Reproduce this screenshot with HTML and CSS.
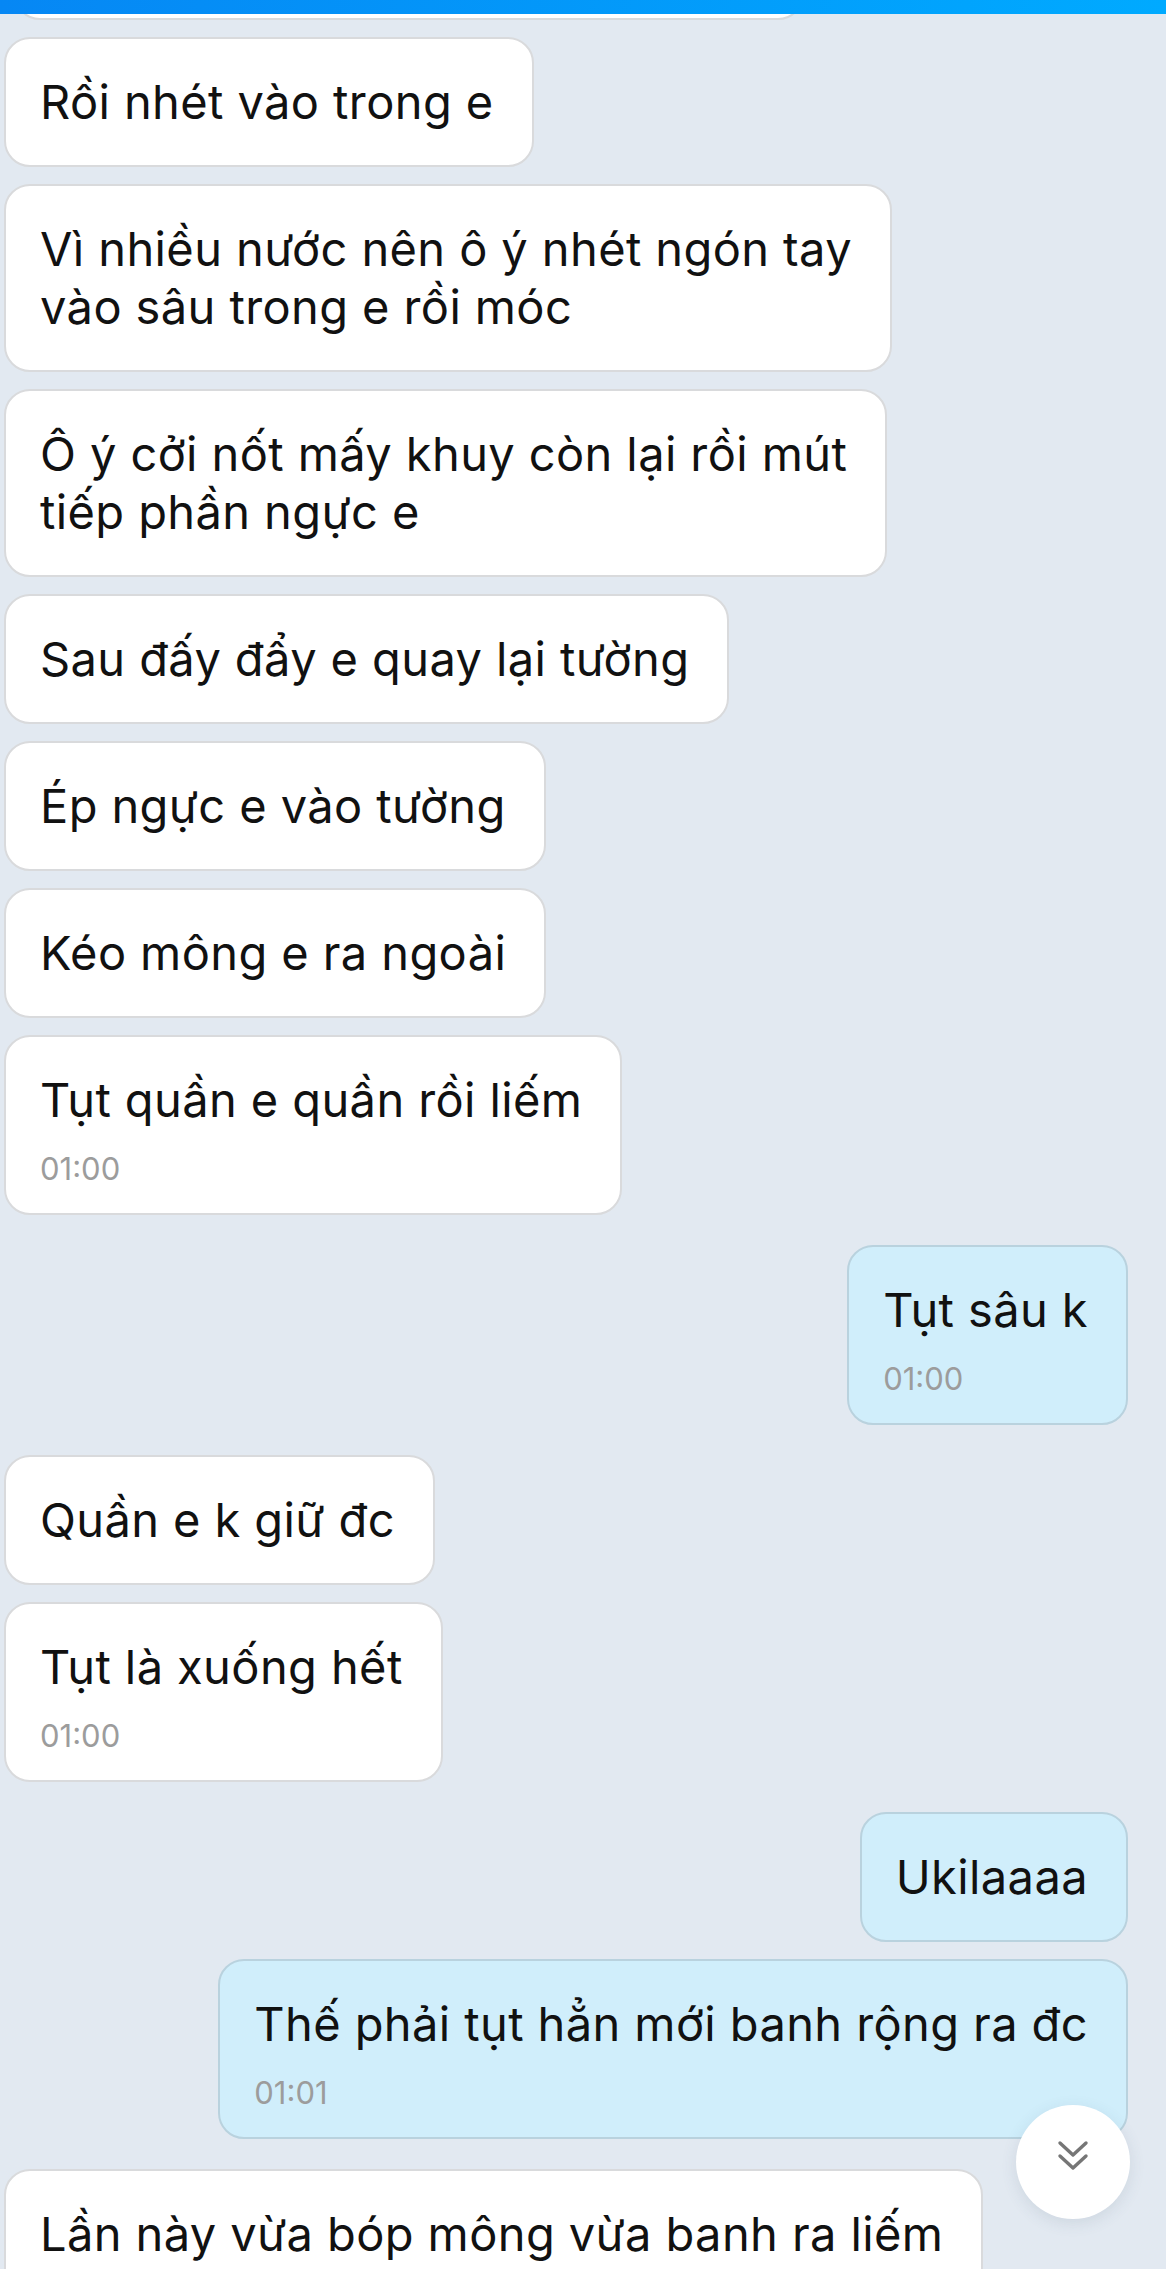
FILE: index.html
```html
<!DOCTYPE html>
<html>
<head>
	<meta charset="utf-8">
	<title>Chat</title>
	<link rel="stylesheet" href="styles.css">
</head>
<body>
	<div class="topbar"></div>

	<main class="chat">
		<div class="group in">
			<div class="bubble peek"></div>
			<div class="bubble">Rồi nhét vào trong e</div>
			<div class="bubble">Vì nhiều nước nên ô ý nhét ngón tay<br>vào sâu trong e rồi móc</div>
			<div class="bubble">Ô ý cởi nốt mấy khuy còn lại rồi mút<br>tiếp phần ngực e</div>
			<div class="bubble">Sau đấy đẩy e quay lại tường</div>
			<div class="bubble">Ép ngực e vào tường</div>
			<div class="bubble">Kéo mông e ra ngoài</div>
			<div class="bubble has-time">Tụt quần e quần rồi liếm<span class="time">01:00</span></div>
		</div>

		<div class="group out">
			<div class="bubble has-time">Tụt sâu k<span class="time">01:00</span></div>
		</div>

		<div class="group in">
			<div class="bubble">Quần e k giữ đc</div>
			<div class="bubble has-time">Tụt là xuống hết<span class="time">01:00</span></div>
		</div>

		<div class="group out">
			<div class="bubble">Ukilaaaa</div>
			<div class="bubble has-time">Thế phải tụt hẳn mới banh rộng ra đc<span class="time">01:01</span></div>
		</div>

		<div class="group in">
			<div class="bubble">Lần này vừa bóp mông vừa banh ra liếm</div>
		</div>
	</main>

	<button type="button" class="scroll-down">
		<svg width="34" height="34" viewBox="0 0 34 34">
			<polyline points="4,4 17,16 30,4" fill="none" stroke="#767676" stroke-width="3.4" stroke-linecap="round" stroke-linejoin="round"/>
			<polyline points="4,17 17,29 30,17" fill="none" stroke="#767676" stroke-width="3.4" stroke-linecap="round" stroke-linejoin="round"/>
		</svg>
	</button>
</body>
</html>
```

FILE: styles.css
```css
*{
	margin: 0px;
	padding: 0px;
	box-sizing: border-box;
}
html,body{
	background: #e2e9f1;
	height: 100%;
	overflow: hidden;
}
body{
	font-family: "Inter", "Roboto", "Liberation Sans", sans-serif;
	color: #111;
}
.topbar{
	position: fixed;
	top: 0px;
	left: 0px;
	right: 0px;
	height: 14px;
	background: linear-gradient(90deg, #0687f4, #00aaff);
	z-index: 5;
}
.chat{
	display: flex;
	flex-direction: column;
	gap: 30px;
}
.group{
	display: flex;
	flex-direction: column;
	gap: 17px;
}
.group.in{
	align-items: flex-start;
	padding-left: 4px;
}
.group.out{
	align-items: flex-end;
	padding-right: 38px;
}
.bubble{
	max-width: 980px;
	background: #fff;
	border: 2px solid #d9dadc;
	border-radius: 26px;
	padding: 34px 38px 34px 34px;
	font-size: 47px;
	line-height: 58px;
	letter-spacing: 0.4px;
}
.out .bubble{
	background: #d0eefb;
	border-color: #b9d2de;
}
.bubble.peek{
	width: 790px;
	height: 130px;
	margin-top: -110px;
	margin-left: 10px;
}
.bubble.has-time{
	padding-bottom: 26px;
}
.time{
	display: block;
	margin-top: 22px;
	font-size: 31px;
	line-height: 36px;
	letter-spacing: 0px;
	color: #9c9c9c;
}
.scroll-down{
	position: fixed;
	right: 36px;
	bottom: 50px;
	width: 114px;
	height: 114px;
	border-radius: 50%;
	border: none;
	outline: none;
	background: #fff;
	box-shadow: 0px 4px 16px rgba(60, 80, 110, 0.12);
	display: flex;
	align-items: center;
	justify-content: center;
	padding-bottom: 12px;
}
```
